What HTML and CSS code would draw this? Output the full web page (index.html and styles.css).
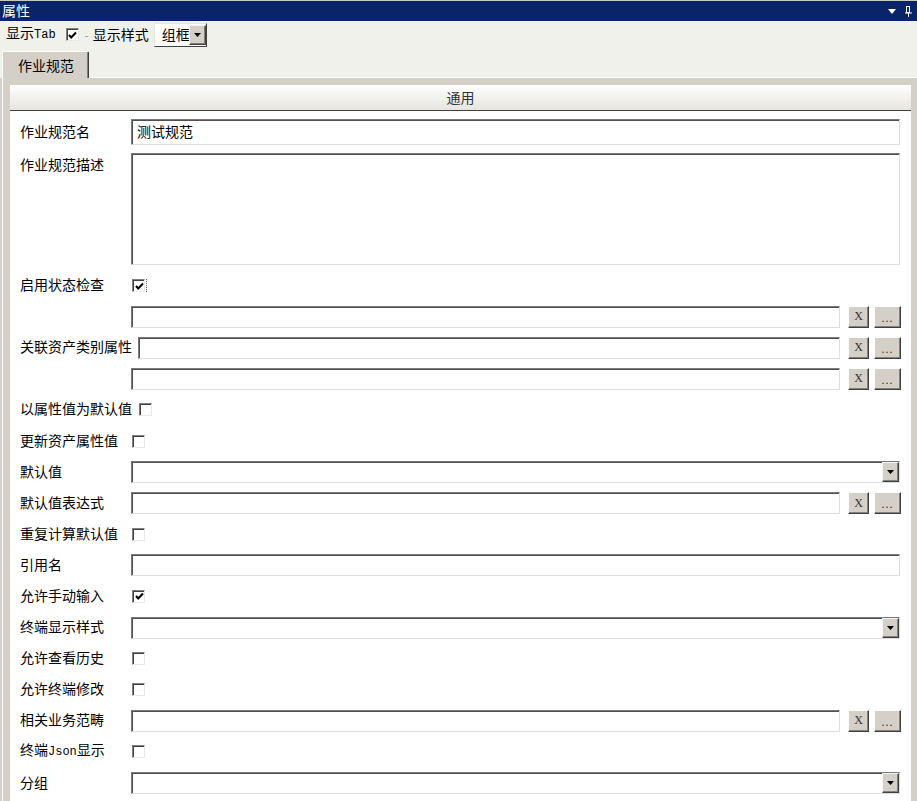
FILE: index.html
```html
<!DOCTYPE html>
<html lang="zh-CN">
<head>
<meta charset="utf-8">
<title>属性</title>
<link rel="stylesheet" href="styles.css">
</head>
<body>
<div class="window">
  <div class="titlebar">
    <span class="title">属性</span>
    <div class="tb-icons">
      <svg class="tb-drop" width="8" height="5" viewBox="0 0 8 5"><polygon points="0,0 8,0 4,5" fill="#fff"/></svg>
      <svg class="tb-pin" width="7" height="11" viewBox="0 0 7 11"><rect x="1.5" y="0.5" width="3" height="6" fill="none" stroke="#fff"/><line x1="0" y1="7" x2="7" y2="7" stroke="#fff"/><line x1="3.5" y1="7" x2="3.5" y2="11" stroke="#fff"/></svg>
    </div>
  </div>

  <div class="toolbar">
    <span class="tl">显示<span class="latin">Tab</span></span>
    <span class="cb cb-tool checked"><svg width="9" height="9" viewBox="0 0 9 9"><polyline points="1,4 3.2,6.5 8,1.5" fill="none" stroke="#000" stroke-width="2"/></svg></span>
    <span class="sep">-</span>
    <span class="tl">显示样式</span>
    <div class="combo">
      <span class="combo-text">组框</span>
      <span class="ddbtn"><svg width="7" height="4" viewBox="0 0 7 4"><polygon points="0,0 7,0 3.5,4" fill="#000"/></svg></span>
    </div>
  </div>

  <div class="tabstrip">
    <div class="tab">作业规范</div>
    <div class="tabfill"></div>
  </div>

  <div class="panel">
    <div class="sheet">
      <div class="sheet-head">通用</div>
      <div class="form">
        <div class="row row-first">
          <span class="lbl">作业规范名</span>
          <div class="field field-tall full"><span class="val">测试规范</span></div>
        </div>
        <div class="row row-area">
          <span class="lbl lbl-top">作业规范描述</span>
          <div class="field area full"></div>
        </div>
        <div class="row">
          <span class="lbl">启用状态检查</span>
          <span class="cb checked focus"><svg width="9" height="9" viewBox="0 0 9 9"><polyline points="1,4 3.2,6.5 8,1.5" fill="none" stroke="#000" stroke-width="2"/></svg></span>
        </div>
        <div class="row">
          <span class="lbl"></span>
          <div class="field"></div>
          <span class="btn btn-x">X</span>
          <span class="btn btn-dots">...</span>
        </div>
        <div class="row">
          <span class="lbl">关联资产类别属性</span>
          <div class="field"></div>
          <span class="btn btn-x">X</span>
          <span class="btn btn-dots">...</span>
        </div>
        <div class="row">
          <span class="lbl"></span>
          <div class="field"></div>
          <span class="btn btn-x">X</span>
          <span class="btn btn-dots">...</span>
        </div>
        <div class="row">
          <span class="lbl">以属性值为默认值</span>
          <span class="cb"></span>
        </div>
        <div class="row">
          <span class="lbl">更新资产属性值</span>
          <span class="cb"></span>
        </div>
        <div class="row">
          <span class="lbl">默认值</span>
          <div class="field select full"><span class="ddbtn"><svg width="7" height="4" viewBox="0 0 7 4"><polygon points="0,0 7,0 3.5,4" fill="#000"/></svg></span></div>
        </div>
        <div class="row">
          <span class="lbl">默认值表达式</span>
          <div class="field"></div>
          <span class="btn btn-x">X</span>
          <span class="btn btn-dots">...</span>
        </div>
        <div class="row">
          <span class="lbl">重复计算默认值</span>
          <span class="cb"></span>
        </div>
        <div class="row">
          <span class="lbl">引用名</span>
          <div class="field full"></div>
        </div>
        <div class="row">
          <span class="lbl">允许手动输入</span>
          <span class="cb checked"><svg width="9" height="9" viewBox="0 0 9 9"><polyline points="1,4 3.2,6.5 8,1.5" fill="none" stroke="#000" stroke-width="2"/></svg></span>
        </div>
        <div class="row">
          <span class="lbl">终端显示样式</span>
          <div class="field select full"><span class="ddbtn"><svg width="7" height="4" viewBox="0 0 7 4"><polygon points="0,0 7,0 3.5,4" fill="#000"/></svg></span></div>
        </div>
        <div class="row">
          <span class="lbl">允许查看历史</span>
          <span class="cb"></span>
        </div>
        <div class="row">
          <span class="lbl">允许终端修改</span>
          <span class="cb"></span>
        </div>
        <div class="row">
          <span class="lbl">相关业务范畴</span>
          <div class="field"></div>
          <span class="btn btn-x">X</span>
          <span class="btn btn-dots">...</span>
        </div>
        <div class="row">
          <span class="lbl">终端<span class="latin">Json</span>显示</span>
          <span class="cb"></span>
        </div>
        <div class="row">
          <span class="lbl">分组</span>
          <div class="field select full"><span class="ddbtn"><svg width="7" height="4" viewBox="0 0 7 4"><polygon points="0,0 7,0 3.5,4" fill="#000"/></svg></span></div>
        </div>
      </div>
    </div>
  </div>
</div>
</body>
</html>
```

FILE: styles.css
```css
html, body {
  margin: 0;
  padding: 0;
}
body {
  width: 917px;
  height: 801px;
  overflow: hidden;
  background: #d4d0c8;
  font-family: "Noto Sans CJK SC", "Noto Sans", sans-serif;
  font-size: 14px;
  color: #000;
}
.window {
  display: flex;
  flex-direction: column;
  height: 801px;
}
.latin {
  font-family: "Liberation Mono", monospace;
  font-size: 12px;
}

/* title bar */
.titlebar {
  height: 20px;
  border-top: 1px solid #c8c8c8;
  background: #0a246a;
  color: #fff;
  display: flex;
  align-items: center;
  padding-left: 2px;
  flex: none;
}
.title {
  line-height: 20px;
  font-size: 14px;
  padding-bottom: 2px;
}
.tb-icons {
  margin-left: auto;
  display: flex;
  align-items: center;
  gap: 9px;
  padding-right: 5px;
}
.tb-drop { margin-top: 1px; }

/* toolbar */
.toolbar {
  height: 27px;
  background: #f1f1ec;
  display: flex;
  align-items: center;
  padding-left: 6px;
  flex: none;
}
.tl {
  line-height: 18px;
  padding-bottom: 2px;
}
.cb.cb-tool { margin-left: 10px; }
.sep {
  color: #9a9a9a;
  margin-left: 6px;
  margin-right: 4px;
  font-size: 12px;
}
.combo {
  margin-left: 5px;
  width: 53px;
  height: 24px;
  box-sizing: border-box;
  background: #fff;
  border: 1px solid;
  border-color: #e4e4e4 #404040 #404040 #e4e4e4;
  display: flex;
  align-items: stretch;
  overflow: hidden;
}
.combo-text {
  flex: 1;
  padding-left: 7px;
  line-height: 20px;
  font-size: 14px;
  overflow: hidden;
  white-space: nowrap;
}
.combo .ddbtn {
  width: 17px;
  flex: none;
  margin: 1px 0;
}

/* tabs */
.tabstrip {
  height: 30px;
  background: #f1f1ec;
  display: flex;
  align-items: flex-end;
  flex: none;
}
.tab {
  margin-left: 2px;
  height: 27px;
  box-sizing: border-box;
  padding: 3px 14px 0 15px;
  background: #d4d0c8;
  border-top: 1px solid #fff;
  border-left: 1px solid #fff;
  border-right: 1px solid #404040;
  box-shadow: inset -1px 0 0 #808080;
  border-top-left-radius: 2px;
  border-top-right-radius: 2px;
  line-height: 20px;
}
.tabfill {
  flex: 1;
  align-self: stretch;
  border-bottom: 1px solid #fff;
  background: #f1f1ec;
}

/* panel */
.panel {
  flex: 1;
  margin-left: 2px;
  border-left: 1px solid #fff;
  padding: 7px 6px 0 7px;
  background: #d4d0c8;
  display: flex;
  min-height: 0;
}
.sheet {
  width: 901px;
  background: #fff;
  display: flex;
  flex-direction: column;
}
.sheet-head {
  height: 25px;
  border-bottom: 1px solid #404040;
  background: linear-gradient(#ffffff, #f4f4f2 40%, #e6e5e0);
  text-align: center;
  line-height: 25px;
  color: #333;
  flex: none;
}

/* form */
.form {
  padding: 5px 10px 0 10px;
}
.row {
  height: 31.1px;
  display: flex;
  align-items: center;
}
.row-first { height: 32px; }
.row-area {
  height: 122px;
  box-sizing: border-box;
  padding: 5px 0;
  align-items: flex-start;
}
.lbl {
  min-width: 105px;
  margin-right: 6px;
  white-space: nowrap;
  line-height: 18px;
  padding-bottom: 3px;
}
.lbl-top { padding-top: 2px; }

.field {
  flex: 1;
  height: 22px;
  box-sizing: border-box;
  border: 1px solid;
  border-color: #7a7a7a #dedede #dedede #7a7a7a;
  box-shadow: inset 1px 1px 0 #505050;
  background: #fff;
  display: flex;
  align-items: center;
}
.field.full { margin-right: 1px; }
.field-tall { height: 26px; }
.area { height: 112px; }
.val {
  padding-left: 5px;
  line-height: 18px;
  padding-bottom: 3px;
}
.select { justify-content: flex-end; }
.select .ddbtn {
  width: 17px;
  height: 20px;
}

.ddbtn {
  box-sizing: border-box;
  background: #d4d0c8;
  border-top: 1px solid #f4f4f4;
  border-left: 1px solid #f4f4f4;
  border-right: 1px solid #404040;
  border-bottom: 1px solid #404040;
  box-shadow: inset -1px -1px 0 #808080;
  display: flex;
  align-items: center;
  justify-content: center;
}

.btn {
  height: 22px;
  box-sizing: border-box;
  background: #d4d0c8;
  border-top: 1px solid #fff;
  border-left: 1px solid #fff;
  border-right: 1px solid #404040;
  border-bottom: 1px solid #404040;
  box-shadow: inset -1px -1px 0 #808080;
  display: flex;
  align-items: center;
  justify-content: center;
  font-family: "Liberation Serif", serif;
  font-size: 12px;
  color: #333;
  flex: none;
}
.btn-x {
  width: 21px;
  margin-left: 8px;
}
.btn-dots {
  width: 27px;
  margin-left: 5px;
  letter-spacing: 1px;
  padding-top: 3px;
}

/* checkbox */
.cb {
  position: relative;
  width: 13px;
  height: 13px;
  box-sizing: border-box;
  border: 1px solid;
  border-color: #808080 #e8e8e8 #e8e8e8 #808080;
  box-shadow: inset 1px 1px 0 #404040;
  background: #fff;
  display: flex;
  align-items: center;
  justify-content: center;
  margin-left: 1px;
  flex: none;
}
.cb svg { margin: 1px 0 0 1px; }
.cb.focus::after {
  content: "";
  position: absolute;
  right: -3px;
  top: -1px;
  height: 13px;
  border-right: 1px dotted #555;
}
```
